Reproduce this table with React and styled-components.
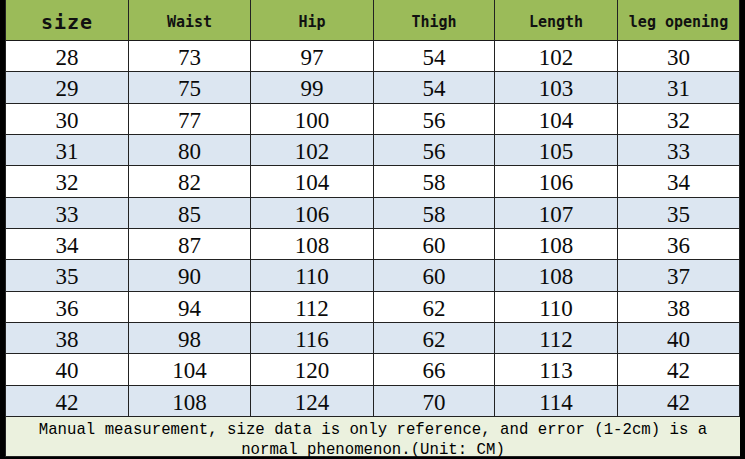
import styled, { createGlobalStyle } from "styled-components";

const GlobalStyle = createGlobalStyle`
  html, body {
    margin: 0;
    padding: 0;
    background: #ffffff;
  }
  * {
    box-sizing: border-box;
  }
`;

const Page = styled.div`
  display: flex;
  width: 745px;
  height: 459px;
  background: #000;
  padding: 0 6px 0 5px;
`;

const Table = styled.div`
  display: grid;
  grid-template-columns: 123px 122px 123px 121px 123px 122px;
  grid-template-rows: 41px repeat(12, 31.33px) 40px;
  width: 734px;
  height: 457px;
  border-left: 1px solid #222;
  background: #fff;
`;

const HeadCell = styled.div`
  display: flex;
  align-items: center;
  justify-content: center;
  background: #9bbb59;
  border-right: 1px solid #222;
  border-bottom: 1px solid #1a1a1a;
  font-family: "DejaVu Sans Mono", "Liberation Mono", monospace;
  font-weight: bold;
  font-size: ${(p) => (p.$big ? "20px" : "15px")};
  letter-spacing: ${(p) => (p.$big ? "1px" : "0")};
  color: #111;
  padding-top: 3px;
`;

const Cell = styled.div`
  display: flex;
  align-items: center;
  justify-content: center;
  background: ${(p) => (p.$alt ? "#dce6f1" : "#ffffff")};
  border-right: 1px solid #222;
  border-bottom: 1px solid #222;
  font-family: "Liberation Serif", "Times New Roman", serif;
  font-size: 23px;
  color: #0a0a0a;
  padding-top: 4px;
`;

const Footer = styled.div`
  grid-column: 1 / -1;
  display: flex;
  align-items: center;
  justify-content: center;
  text-align: center;
  background: #ebf1de;
  border-bottom: 1px solid #222;
  font-family: "Liberation Mono", "Courier New", monospace;
  font-size: 15.7px;
  line-height: 20px;
  color: #000;
  padding-top: 8px;
  white-space: nowrap;
`;

const headers = ["size", "Waist", "Hip", "Thigh", "Length", "leg opening"];

const rows = [
  [28, 73, 97, 54, 102, 30],
  [29, 75, 99, 54, 103, 31],
  [30, 77, 100, 56, 104, 32],
  [31, 80, 102, 56, 105, 33],
  [32, 82, 104, 58, 106, 34],
  [33, 85, 106, 58, 107, 35],
  [34, 87, 108, 60, 108, 36],
  [35, 90, 110, 60, 108, 37],
  [36, 94, 112, 62, 110, 38],
  [38, 98, 116, 62, 112, 40],
  [40, 104, 120, 66, 113, 42],
  [42, 108, 124, 70, 114, 42],
];

export default function App() {
  return (
    <>
      <GlobalStyle />
      <Page>
        <Table>
          {headers.map((h, i) => (
            <HeadCell key={h} $big={i === 0}>
              {h}
            </HeadCell>
          ))}
          {rows.map((row, r) =>
            row.map((v, c) => (
              <Cell key={`${r}-${c}`} $alt={r % 2 === 1}>
                {v}
              </Cell>
            ))
          )}
          <Footer>
            Manual measurement, size data is only reference, and error (1-2cm) is a
            <br />
            normal phenomenon.(Unit: CM)
          </Footer>
        </Table>
      </Page>
    </>
  );
}
